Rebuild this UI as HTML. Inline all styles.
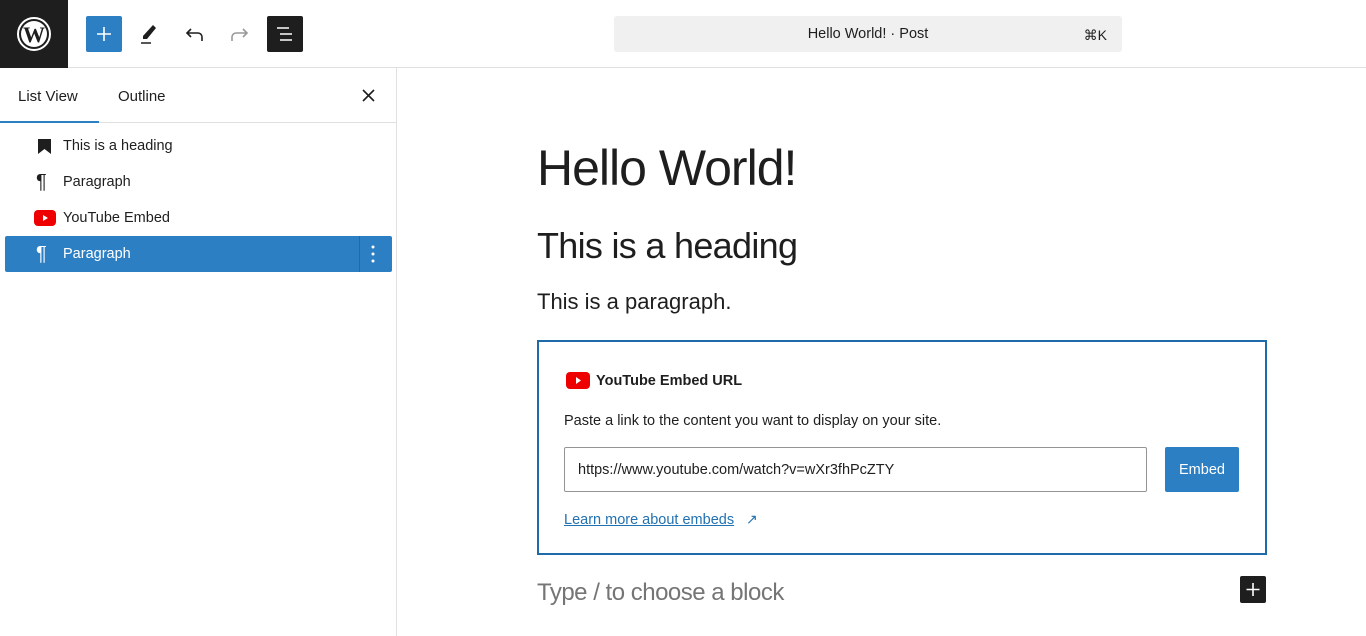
<!DOCTYPE html>
<html><head><meta charset="utf-8"><style>
*{box-sizing:border-box;margin:0;padding:0}
body{width:1366px;height:636px;overflow:hidden;background:#fff;font-family:"Liberation Sans",sans-serif;color:#1e1e1e;position:relative}
.abs{position:absolute}
.top{left:0;top:0;width:1366px;height:68px;border-bottom:1px solid #e0e0e0}
.logo{left:0;top:0;width:68px;height:68px;background:#1e1e1e}
.side{left:0;top:68px;width:397px;height:568px;border-right:1px solid #e0e0e0}
.item{position:absolute;left:63px;font-size:14.5px;color:#1e1e1e}
</style></head><body>
<div class="abs top"></div>
<div class="abs logo">
<svg width="68" height="68" viewBox="0 0 68 68"><circle cx="34" cy="34" r="16" fill="none" stroke="#fff" stroke-width="2"/><circle cx="34" cy="34" r="13" fill="#fff"/><text x="34" y="42" text-anchor="middle" font-family="Liberation Serif" font-weight="bold" font-size="22" fill="#1e1e1e">W</text></svg>
</div>
<div class="abs" style="left:86px;top:16px;width:36px;height:36px;background:#2d7fc4;border-radius:2px"><svg width="36" height="36"><path d="M18 11v14M11 18h14" stroke="#fff" stroke-width="1.6"/></svg></div>
<svg class="abs" style="left:136px;top:20px" width="26" height="28"><path d="M7 19l4 0 9-11-3-3-10 11z" fill="#1e1e1e"/><path d="M5 23h10" stroke="#1e1e1e" stroke-width="1.5"/></svg>
<svg class="abs" style="left:182px;top:22px" width="26" height="24"><path d="M20 19v-4a4 4 0 0 0-4-4H5M9 7l-4 4 4 4" fill="none" stroke="#1e1e1e" stroke-width="1.6"/></svg>
<svg class="abs" style="left:226px;top:22px" width="26" height="24"><path d="M6 19v-4a4 4 0 0 1 4-4h11M17 7l4 4-4 4" fill="none" stroke="#999" stroke-width="1.6"/></svg>
<div class="abs" style="left:267px;top:16px;width:36px;height:36px;background:#1e1e1e;border-radius:2px"><svg width="36" height="36"><path d="M10 12h12M13 18h12M13 24h12" stroke="#fff" stroke-width="1.6"/></svg></div>
<div class="abs" style="left:614px;top:16px;width:508px;height:36px;background:#f0f0f0;border-radius:3px;font-size:14.5px">
<span class="abs" style="left:0;width:508px;text-align:center;top:10px">Hello World! · Post</span>
<span class="abs" style="right:15px;top:11px;font-size:14px">⌘K</span></div>
<div class="abs side"></div>
<div class="abs" style="left:18px;top:88px;font-size:15px">List View</div>
<div class="abs" style="left:118px;top:88px;font-size:15px">Outline</div>
<div class="abs" style="left:0;top:122px;width:397px;height:1px;background:#e0e0e0"></div>
<div class="abs" style="left:0;top:121px;width:99px;height:2px;background:#2d7fc4"></div>
<svg class="abs" style="left:361px;top:88px" width="15" height="15"><path d="M2 2l11 11M13 2L2 13" stroke="#1e1e1e" stroke-width="1.6"/></svg>
<svg class="abs" style="left:37px;top:138px" width="15" height="16"><path d="M1 1h13v15l-6.5-5L1 16z" fill="#1e1e1e"/></svg>
<div class="item" style="top:138px">This is a heading</div>
<div class="abs" style="left:36px;top:171px;font-size:20px">¶</div>
<div class="item" style="top:174px">Paragraph</div>
<div class="abs" style="left:34px;top:210px;width:22px;height:16px;background:#e00;border-radius:4px"><svg width="22" height="16"><path d="M9 5v6l5-3z" fill="#fff"/></svg></div>
<div class="item" style="top:210px">YouTube Embed</div>
<div class="abs" style="left:5px;top:236px;width:387px;height:36px;background:#2d7fc4;border-radius:2px"></div>
<div class="abs" style="left:359px;top:236px;width:1px;height:36px;background:#1f6aa8"></div>
<div class="abs" style="left:36px;top:243px;font-size:20px;color:#fff">¶</div>
<div class="item" style="top:246px;color:#fff">Paragraph</div>
<svg class="abs" style="left:366px;top:244px" width="14" height="20"><circle cx="7" cy="3" r="1.5" fill="#fff"/><circle cx="7" cy="10" r="1.5" fill="#fff"/><circle cx="7" cy="17" r="1.5" fill="#fff"/></svg>
<div class="abs" style="left:537px;top:139px;font-size:50px;letter-spacing:-1px">Hello World!</div>
<div class="abs" style="left:537px;top:225px;font-size:36px;letter-spacing:-.7px">This is a heading</div>
<div class="abs" style="left:537px;top:289px;font-size:22px">This is a paragraph.</div>
<div class="abs" style="left:537px;top:340px;width:730px;height:215px;border:2px solid #1f6aa8"></div>
<div class="abs" style="left:566px;top:372px;width:24px;height:17px;background:#e00;border-radius:4px"><svg width="24" height="17"><path d="M10 5v7l5-3.5z" fill="#fff"/></svg></div>
<div class="abs" style="left:596px;top:373px;font-size:14.5px;font-weight:bold">YouTube Embed URL</div>
<div class="abs" style="left:564px;top:413px;font-size:14.5px">Paste a link to the content you want to display on your site.</div>
<div class="abs" style="left:564px;top:447px;width:583px;height:45px;border:1px solid #949494;border-radius:2px;font-size:14.5px;padding:14px 13px">https://www.youtube.com/watch?v=wXr3fhPcZTY</div>
<div class="abs" style="left:1165px;top:447px;width:74px;height:45px;background:#2d7fc4;border-radius:2px;color:#fff;font-size:14.5px;text-align:center;line-height:46px">Embed</div>
<div class="abs" style="left:564px;top:512px;font-size:14.5px;color:#2271b1;text-decoration:underline">Learn more about embeds</div>
<div class="abs" style="left:746px;top:511px;font-size:14px;color:#2271b1">↗</div>
<div class="abs" style="left:537px;top:579px;font-size:24px;color:#757575;letter-spacing:-.5px">Type / to choose a block</div>
<div class="abs" style="left:1240px;top:576px;width:26px;height:27px;background:#1e1e1e;border-radius:2px"><svg width="26" height="27"><path d="M13 7v13M6.5 13.5h13" stroke="#fff" stroke-width="1.6"/></svg></div>
</body></html>
